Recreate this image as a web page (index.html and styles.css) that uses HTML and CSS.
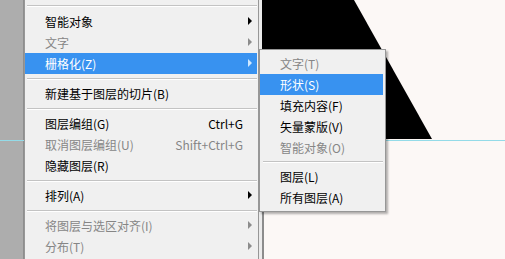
FILE: index.html
```html
<!DOCTYPE html>
<html>
<head>
    <title>图层 - 栅格化</title>
    <meta charset="UTF-8">
    <meta name="viewport" content="width=device-width, initial-scale=1.0">
    <link rel="stylesheet" href="styles.css">
</head>
<body>
    <div class="workspace">
        <div class="panel-strip"></div>
        <div class="gutter"></div>
        <div class="canvas">
            <!-- black shape layer on the document -->
            <svg class="shape" width="170" height="140" viewBox="0 0 170 140">
                <polygon points="0,0 92,0 170,139 0,139" fill="#000"/>
            </svg>
        </div>
        <div class="guide"></div>

        <ul class="menu main-menu">
            <li class="sep sep-top"></li>
            <li class="item has-sub"><span class="label">智能对象</span></li>
            <li class="item has-sub disabled"><span class="label">文字</span></li>
            <li class="item has-sub active"><span class="label">栅格化(Z)</span></li>
            <li class="sep"></li>
            <li class="item"><span class="label">新建基于图层的切片(B)</span></li>
            <li class="sep"></li>
            <li class="item"><span class="label">图层编组(G)</span><span class="key">Ctrl+G</span></li>
            <li class="item disabled"><span class="label">取消图层编组(U)</span><span class="key">Shift+Ctrl+G</span></li>
            <li class="item"><span class="label">隐藏图层(R)</span></li>
            <li class="sep"></li>
            <li class="item has-sub"><span class="label">排列(A)</span></li>
            <li class="sep"></li>
            <li class="item has-sub disabled"><span class="label">将图层与选区对齐(I)</span></li>
            <li class="item has-sub disabled"><span class="label">分布(T)</span></li>
        </ul>

        <ul class="menu sub-menu">
            <li class="item disabled"><span class="label">文字(T)</span></li>
            <li class="item active"><span class="label">形状(S)</span></li>
            <li class="item"><span class="label">填充内容(F)</span></li>
            <li class="item"><span class="label">矢量蒙版(V)</span></li>
            <li class="item disabled"><span class="label">智能对象(O)</span></li>
            <li class="sep"></li>
            <li class="item"><span class="label">图层(L)</span></li>
            <li class="item"><span class="label">所有图层(A)</span></li>
        </ul>
    </div>
</body>
</html>
```

FILE: styles.css
```css
body {
    margin: 0;
    font-family: "Noto Sans CJK SC", "Liberation Sans", sans-serif;
    font-size: 12px;
    color: #000;
    background: #fcf8f6;
    overflow: hidden;
}
.workspace {
    position: relative;
    display: flex;
    width: 505px;
    height: 259px;
    overflow: hidden;
}
.panel-strip {
    width: 23px;
    flex: none;
    background: #adadad;
    border-right: 1px solid #8e8e8e;
}
.gutter {
    width: 238px;
    flex: none;
    background: #ebebeb;
}
.canvas {
    position: relative;
    flex: 1;
    background: #fcf8f6;
    border-left: 2px solid #8c8c8c;
}
.shape {
    position: absolute;
    left: -2px;
    top: 0;
    display: block;
}
.guide {
    position: absolute;
    left: 0;
    right: 0;
    top: 140px;
    height: 1px;
    background: #94dbe8;
}

/* menus */
.menu {
    position: absolute;
    margin: 0;
    padding: 0;
    list-style: none;
    background: #f0f0f0;
    box-sizing: border-box;
}
.main-menu {
    left: 24px;
    top: 0;
    width: 235px;
    height: 270px;
    border-left: 1px solid #979797;
    border-right: 1px solid #979797;
    padding-right: 1px;
}
.sub-menu {
    left: 259px;
    top: 49px;
    width: 127px;
    border: 1px solid #979797;
    padding: 3px 2px 3px 0;
    box-shadow: 2px 2px 2px rgba(0, 0, 0, 0.3);
}
.item {
    position: relative;
    display: flex;
    height: 21px;
    line-height: 21px;
    padding: 0 14px 0 20px;
    white-space: nowrap;
}
.item .label {
    flex: 1;
}
.item .key {
    text-align: right;
}
.item.disabled {
    color: #868686;
}
.item.active {
    background: #3892f0;
    color: #fff;
}
.has-sub::after {
    content: "";
    position: absolute;
    right: 5px;
    top: 6px;
    border-top: 4px solid transparent;
    border-bottom: 4px solid transparent;
    border-left: 4px solid #000;
}
.has-sub.disabled::after {
    border-left-color: #8c8c8c;
}
.has-sub.active::after {
    border-left-color: #cfe8ff;
}
.sep {
    height: 9px;
    position: relative;
}
.sep::before {
    content: "";
    position: absolute;
    left: 2px;
    right: 0;
    top: 4px;
    height: 1px;
    background: #c3c3c3;
    border-bottom: 1px solid #fff;
}
.sep-top {
    height: 11px;
}
.sep-top::before {
    top: 5px;
}
.sub-menu .sep {
    height: 8px;
}
.sub-menu .sep::before {
    top: 3px;
    left: 3px;
}
```
